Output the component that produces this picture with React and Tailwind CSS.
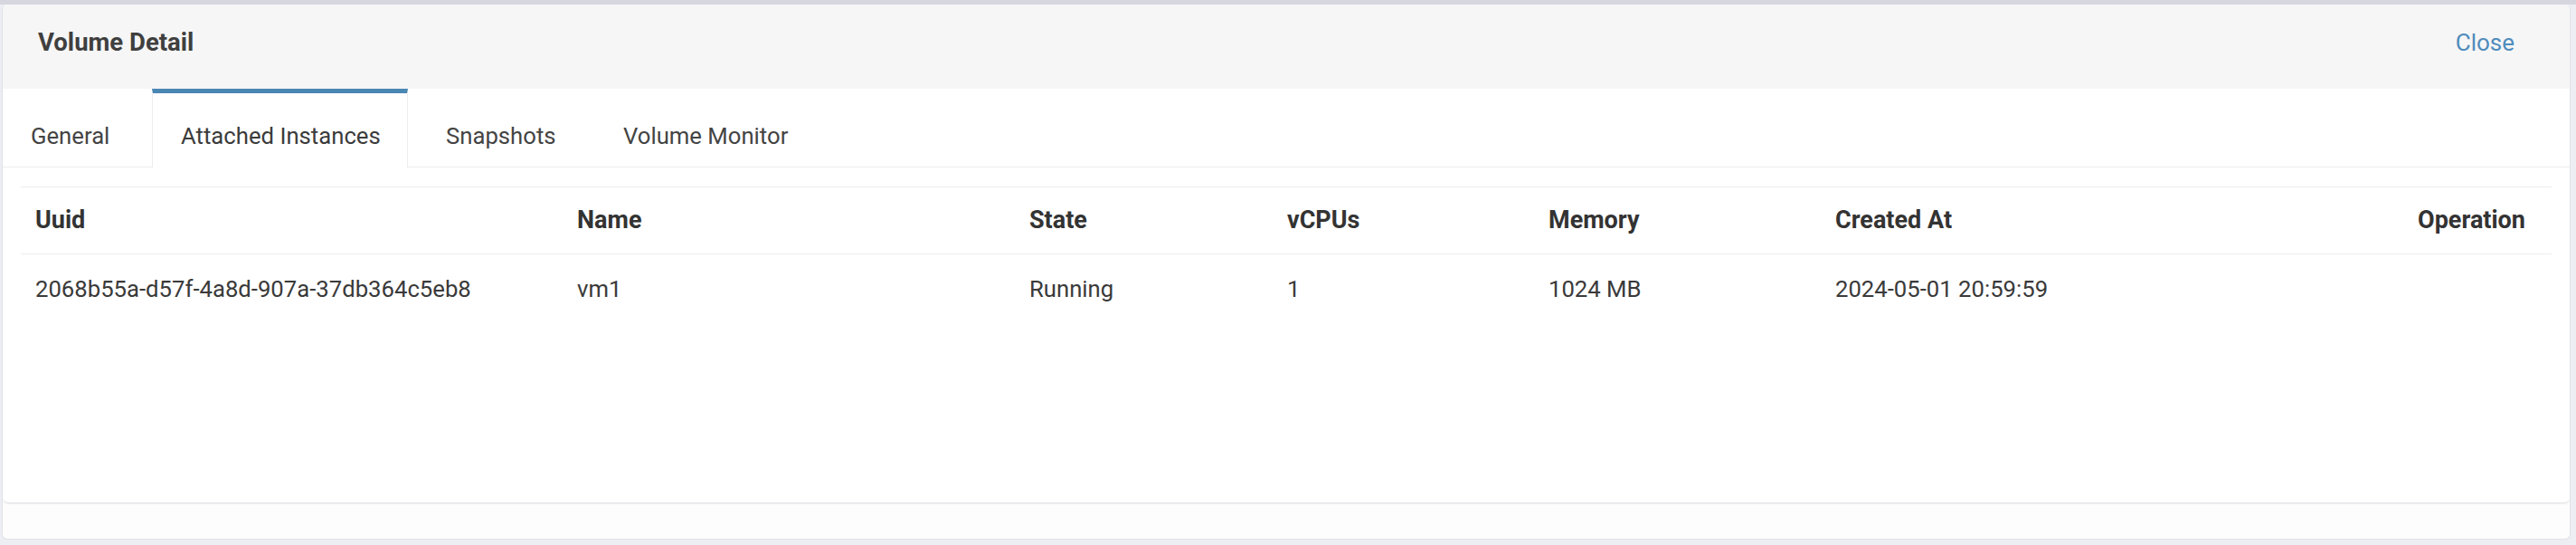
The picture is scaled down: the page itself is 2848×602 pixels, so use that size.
import React from "react";

const tabs = [
  { label: "General", width: "w-[165px]", pad: "pl-[31px]" },
  { label: "Attached Instances", width: "w-[283px]", pad: "pl-[31px]", active: true },
  { label: "Snapshots", width: "w-[196px]", pad: "pl-[42px]" },
  { label: "Volume Monitor", width: "w-[260px]", pad: "pl-[42px]" },
];

const columns = ["Uuid", "Name", "State", "vCPUs", "Memory", "Created At"];

const rows = [
  ["2068b55a-d57f-4a8d-907a-37db364c5eb8", "vm1", "Running", "1", "1024 MB", "2024-05-01 20:59:59"],
];

export default function App() {
  return (
    <div className="w-[2848px] h-[602px] bg-[#eceef3] border-t-[5px] border-[#d5d6de] font-['Roboto',sans-serif] text-[25.7px] text-[#3b3b3b]">
      <div className="ml-[2px] w-[2840px] h-[591px] flex flex-col bg-[#fdfdfd] rounded-md border-x border-b border-[#e1e2e8] overflow-hidden">
        {/* Header */}
        <div className="h-[93px] shrink-0 bg-[#f6f6f6] flex items-start justify-between pl-[39px] pr-[61px] pt-[24px]">
          <h2 className="font-bold text-[27.5px] text-[#3f3f3f] leading-[36px]">Volume Detail</h2>
          <button className="text-[#4f8cbc] text-[26px] leading-[36px]">Close</button>
        </div>

        {/* Tabs + content */}
        <div className="h-[458px] shrink-0 bg-white border-b border-[#e4e4e8] shadow-[0_1px_2px_rgba(0,0,0,0.06)] rounded-b-md">
          <div className="flex h-[87px] border-b border-[#ececec]">
            {tabs.map((tab) =>
              tab.active ? (
                <div
                  key={tab.label}
                  className={`${tab.width} ${tab.pad} h-[87px] -mb-px bg-white border-t-[5px] border-t-[#4a87b5] border-x border-x-[#ececec] pt-[29px] text-[#3b3b3b] leading-[36px]`}
                >
                  {tab.label}
                </div>
              ) : (
                <div
                  key={tab.label}
                  className={`${tab.width} ${tab.pad} h-[86px] pt-[34px] text-[#444] leading-[36px]`}
                >
                  {tab.label}
                </div>
              )
            )}
          </div>

          {/* Table */}
          <div className="mx-[20px] mt-[21px] border-t border-[#ededed]">
            <div className="grid grid-cols-[599px_500px_285px_289px_317px_1fr_auto] h-[74px] items-center border-b border-[#ededed] font-bold text-[27px] text-[#333]">
              {columns.map((col) => (
                <div key={col} className="pl-[16px]">
                  {col}
                </div>
              ))}
              <div className="pr-[29px] text-right">Operation</div>
            </div>
            {rows.map((row) => (
              <div
                key={row[0]}
                className="grid grid-cols-[599px_500px_285px_289px_317px_1fr_auto] h-[76px] items-center text-[#3a3a3a]"
              >
                {row.map((cell, i) => (
                  <div key={i} className="pl-[16px]">
                    {cell}
                  </div>
                ))}
                <div className="pr-[29px]"></div>
              </div>
            ))}
          </div>
        </div>
      </div>
    </div>
  );
}
